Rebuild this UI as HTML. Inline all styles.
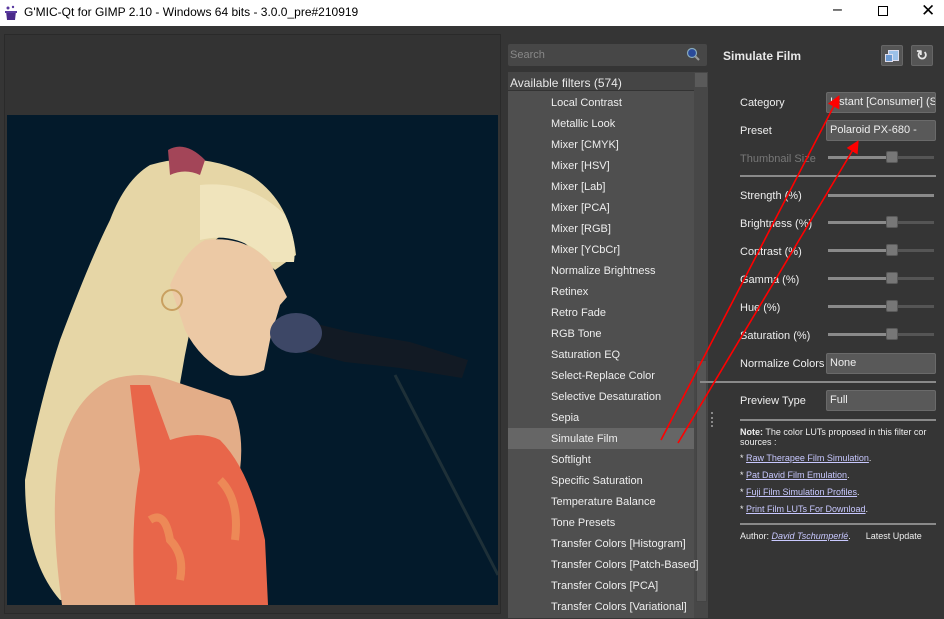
<!DOCTYPE html>
<html><head><meta charset="utf-8"><style>
*{margin:0;padding:0;box-sizing:border-box}
body{width:944px;height:619px;overflow:hidden;background:#353535;font-family:"Liberation Sans",sans-serif;font-size:11px;color:#e8e8e8;position:relative}
.abs{position:absolute}
.title{left:0;top:0;width:944px;height:26px;background:#fff;color:#000;font-size:12px}
.row{position:absolute;left:551px;font-size:11px;color:#eee}
.lbl{position:absolute;left:740px;font-size:11px;color:#eee}
.combo{position:absolute;left:826px;width:110px;height:21px;background:#595959;border:1px solid #6a6a6a;border-radius:2px;color:#eee;padding:3px 3px;white-space:nowrap;overflow:hidden;font-size:11px}
.sl{position:absolute;left:828px;width:106px;height:3px;background:#555}
.sl i{position:absolute;left:0;top:0;height:3px;width:60px;background:#8a8a8a}
.sl b{position:absolute;left:58px;top:-5px;width:12px;height:12px;background:#777;border:1px solid #5a5a5a;border-radius:2px}
.sep{position:absolute;left:740px;width:196px;height:2px;background:#8a8a8a}
a{color:#c8c8ff;text-decoration:underline}
</style></head><body>
<div class="abs title">
 <svg class="abs" style="left:3px;top:5px" width="16" height="16" viewBox="0 0 16 16"><path d="M3 6h10l-1 9H4z" fill="#4a2a8a"/><path d="M2 6h12v2H2z" fill="#5a3aa0"/><circle cx="5" cy="3" r="1.5" fill="#5a3aa0"/><circle cx="10" cy="2" r="1.2" fill="#5a3aa0"/></svg>
 <span class="abs" style="left:24px;top:5px">G'MIC-Qt for GIMP 2.10 - Windows 64 bits - 3.0.0_pre#210919</span>
 <span class="abs" style="left:833px;top:1px;font-size:16px">–</span>
 <div class="abs" style="left:878px;top:6px;width:10px;height:10px;border:1px solid #000"></div>
 <span class="abs" style="left:921px;top:1px;font-size:17px">✕</span>
</div>
<div class="abs" style="left:4px;top:34px;width:497px;height:580px;background:#333;border:1px solid #2a2a2a"></div>
<svg class="abs" style="left:7px;top:115px" width="491" height="490" viewBox="0 0 491 490">
 <rect width="491" height="490" fill="#031a2b"/>
 <g transform="translate(-7,-115)">
  <path d="M395 375 L498 575" stroke="#1e3038" stroke-width="3" fill="none"/>
  <path d="M150 165 Q200 150 250 175 Q290 200 296 255 L275 270 L230 230 L200 250 L190 330 Q175 400 170 470 L150 560 Q110 600 60 600 Q25 560 25 480 Q40 400 60 340 Q90 260 110 220 Q125 180 150 165Z" fill="#e6d6a6"/>
  <path d="M200 185 Q250 180 285 215 Q297 240 294 262 L270 262 Q240 230 200 240Z" fill="#f0e4bc"/>
  <path d="M168 150 Q185 140 205 160 L200 175 Q185 168 170 175Z" fill="#a34558"/>
  <path d="M205 240 Q245 235 270 262 Q278 280 287 297 L280 305 Q276 320 272 330 Q268 350 264 370 Q250 378 230 375 Q200 360 185 330 Q175 300 170 285 Q185 250 205 240Z" fill="#ecc9a5"/>
  <circle cx="172" cy="300" r="10" fill="none" stroke="#c9a060" stroke-width="2"/>
  <path d="M110 380 Q140 370 170 380 L230 400 Q245 430 240 470 L150 520 L140 605 L62 605 Q50 520 58 460 Q70 400 110 380Z" fill="#e3ad88"/>
  <path d="M130 385 L150 385 L170 440 Q200 430 220 440 Q250 470 265 540 L268 605 L135 605 Q130 520 140 470 Z" fill="#e8664a"/>
  <path d="M150 520 Q165 510 170 540 Q185 555 180 580 M220 480 Q240 500 235 540" stroke="#f0a060" stroke-width="8" fill="none" opacity=".6"/>
  <path d="M300 320 L350 332 L410 342 L468 360 L462 378 L400 368 L345 362 L298 350Z" fill="#121a24"/>
  <ellipse cx="296" cy="333" rx="26" ry="20" fill="#3d4766"/>
 </g>
</svg>
<div class="abs" style="left:508px;top:44px;width:199px;height:22px;background:#474747;border-radius:2px"></div>
<span class="abs" style="left:510px;top:49px;color:#888">Search</span>
<svg class="abs" style="left:686px;top:47px" width="14" height="14"><circle cx="6" cy="6" r="4.5" fill="#2a4a9a" stroke="#8ab" stroke-width="1.2"/><path d="M9.5 9.5L13 13" stroke="#999" stroke-width="2"/></svg>
<div class="abs" style="left:508px;top:72px;width:186px;height:546px;background:#4f4f4f"></div>
<div class="abs" style="left:508px;top:72px;width:186px;height:19px;background:#454545;border-bottom:1px solid #333"></div>
<span class="abs" style="left:510px;top:76px;font-size:12px">Available filters (574)</span>
<div class="abs" style="left:694px;top:72px;width:14px;height:546px;background:#474747"></div>
<div class="abs" style="left:695px;top:73px;width:12px;height:14px;background:#5a5a5a"></div>
<div class="abs" style="left:696px;top:360px;width:11px;height:242px;background:#555;border:1px solid #444"></div>
<div class="abs" style="left:508px;top:428px;width:186px;height:21px;background:#666"></div>
<div class="row" style="top:97px">Local Contrast</div>
<div class="row" style="top:118px">Metallic Look</div>
<div class="row" style="top:139px">Mixer [CMYK]</div>
<div class="row" style="top:160px">Mixer [HSV]</div>
<div class="row" style="top:181px">Mixer [Lab]</div>
<div class="row" style="top:202px">Mixer [PCA]</div>
<div class="row" style="top:223px">Mixer [RGB]</div>
<div class="row" style="top:244px">Mixer [YCbCr]</div>
<div class="row" style="top:265px">Normalize Brightness</div>
<div class="row" style="top:286px">Retinex</div>
<div class="row" style="top:307px">Retro Fade</div>
<div class="row" style="top:328px">RGB Tone</div>
<div class="row" style="top:349px">Saturation EQ</div>
<div class="row" style="top:370px">Select-Replace Color</div>
<div class="row" style="top:391px">Selective Desaturation</div>
<div class="row" style="top:412px">Sepia</div>
<div class="row" style="top:433px">Simulate Film</div>
<div class="row" style="top:454px">Softlight</div>
<div class="row" style="top:475px">Specific Saturation</div>
<div class="row" style="top:496px">Temperature Balance</div>
<div class="row" style="top:517px">Tone Presets</div>
<div class="row" style="top:538px">Transfer Colors [Histogram]</div>
<div class="row" style="top:559px">Transfer Colors [Patch-Based]</div>
<div class="row" style="top:580px">Transfer Colors [PCA]</div>
<div class="row" style="top:601px">Transfer Colors [Variational]</div>
<div class="abs" style="left:711px;top:412px;width:3px;height:15px;border-left:2px dotted #888"></div>
<span class="abs" style="left:723px;top:49px;font-weight:bold;font-size:12px">Simulate Film</span>
<div class="abs" style="left:881px;top:45px;width:22px;height:21px;background:#555;border:1px solid #666;border-radius:2px"><div class="abs" style="left:6px;top:4px;width:11px;height:11px;background:#9cc0e8;border:1px solid #dde"></div><div class="abs" style="left:3px;top:8px;width:8px;height:8px;background:#6a98d0;border:1px solid #dde"></div></div>
<div class="abs" style="left:911px;top:45px;width:22px;height:21px;background:#555;border:1px solid #666;border-radius:2px;text-align:center;font-size:14px;font-weight:bold;line-height:19px">↻</div>
<div class="lbl" style="top:97px">Category</div><div class="combo" style="top:92px">Instant [Consumer] (S</div>
<div class="lbl" style="top:125px">Preset</div><div class="combo" style="top:120px">Polaroid PX-680 -</div>
<div class="lbl" style="top:153px;color:#777">Thumbnail Size</div><div class="sl" style="top:156px"><i></i><b></b></div>
<div class="sep" style="top:175px"></div>
<div class="lbl" style="top:190px">Strength (%)</div><div class="sl" style="top:194px"><i style="width:106px"></i></div>
<div class="lbl" style="top:218px">Brightness (%)</div><div class="sl" style="top:221px"><i></i><b></b></div>
<div class="lbl" style="top:246px">Contrast (%)</div><div class="sl" style="top:249px"><i></i><b></b></div>
<div class="lbl" style="top:274px">Gamma (%)</div><div class="sl" style="top:277px"><i></i><b></b></div>
<div class="lbl" style="top:302px">Hue (%)</div><div class="sl" style="top:305px"><i></i><b></b></div>
<div class="lbl" style="top:330px">Saturation (%)</div><div class="sl" style="top:333px"><i></i><b></b></div>
<div class="lbl" style="top:358px">Normalize Colors</div><div class="combo" style="top:353px">None</div>
<div class="sep" style="top:381px;left:700px;width:236px"></div>
<div class="lbl" style="top:395px">Preview Type</div><div class="combo" style="top:390px">Full</div>
<div class="sep" style="top:419px"></div>
<div class="lbl" style="top:427px;font-size:9px;white-space:nowrap"><b>Note:</b> The color LUTs proposed in this filter cor<br>sources :</div>
<div class="lbl" style="top:453px;font-size:9px">* <a>Raw Therapee Film Simulation</a>.</div>
<div class="lbl" style="top:470px;font-size:9px">* <a>Pat David Film Emulation</a>.</div>
<div class="lbl" style="top:487px;font-size:9px">* <a>Fuji Film Simulation Profiles</a>.</div>
<div class="lbl" style="top:504px;font-size:9px">* <a>Print Film LUTs For Download</a>.</div>
<div class="sep" style="top:523px"></div>
<div class="lbl" style="top:531px;font-size:9px;white-space:nowrap">Author: <a style="font-style:italic">David Tschumperlé</a>. &nbsp; &nbsp; &nbsp;Latest Update</div>
<svg class="abs" style="left:0;top:0" width="944" height="619">
 <defs><marker id="ah" markerWidth="8" markerHeight="8" refX="6" refY="4" orient="auto"><path d="M0 0L8 4L0 8z" fill="#f00"/></marker></defs>
 <line x1="661" y1="440" x2="838" y2="98" stroke="#f00" stroke-width="1.6" marker-end="url(#ah)"/>
 <line x1="678" y1="443" x2="857" y2="143" stroke="#f00" stroke-width="1.6" marker-end="url(#ah)"/>
</svg>
</body></html>
